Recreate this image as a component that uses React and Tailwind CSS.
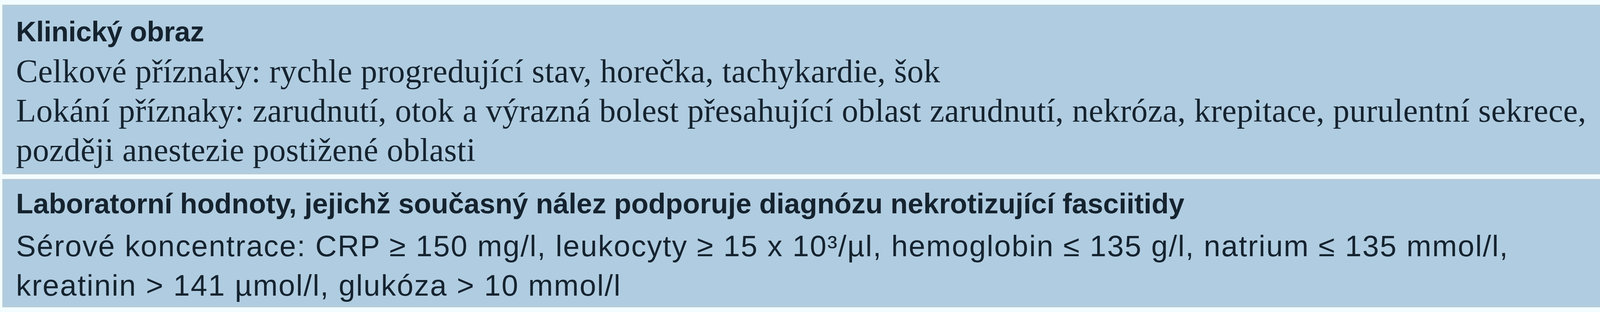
import React from 'react';

const Box = ({ title, lines, bodyFont, titleClass, className }) => (
    <div className={`border-[3px] border-[#b9cad5] bg-[#b0cce0] text-[#15232f] ${className}`}>
        <div className={`font-['Liberation_Sans',Arial,sans-serif] font-bold text-[72px] leading-[101px] ${titleClass}`}>
            {title}
        </div>
        {lines.map((line, i) => (
            <div key={i} className={bodyFont}>
                {line}
            </div>
        ))}
    </div>
);

const App = () => {
    return (
        <div className="w-[4182px] h-[800px] bg-[#f3fdff] pt-[12px] pl-[6px] flex flex-col gap-[12px]">
            <Box
                className="w-[4152px] h-[435px] pl-[32px] pt-[16px]"
                title="Klinický obraz"
                titleClass="tracking-[-0.5px]"
                bodyFont="font-['Liberation_Serif',serif] text-[84px] leading-[101px] tracking-[0.5px]"
                lines={[
                    'Celkové příznaky: rychle progredující stav, horečka, tachykardie, šok',
                    'Lokání příznaky: zarudnutí, otok a výrazná bolest přesahující oblast zarudnutí, nekróza, krepitace, purulentní sekrece,',
                    'později anestezie postižené oblasti',
                ]}
            />
            <Box
                className="w-[4152px] h-[329px] pl-[32px] pt-[10px]"
                title="Laboratorní hodnoty, jejichž současný nález podporuje diagnózu nekrotizující fasciitidy"
                titleClass="mb-[7px]"
                bodyFont="font-['Liberation_Sans',Arial,sans-serif] text-[76px] leading-[101px] tracking-[2.4px]"
                lines={[
                    'Sérové koncentrace: CRP ≥ 150 mg/l, leukocyty ≥ 15 x 10³/µl, hemoglobin ≤ 135 g/l, natrium ≤ 135 mmol/l,',
                    'kreatinin > 141 µmol/l, glukóza > 10 mmol/l',
                ]}
            />
        </div>
    );
};

export default App;
